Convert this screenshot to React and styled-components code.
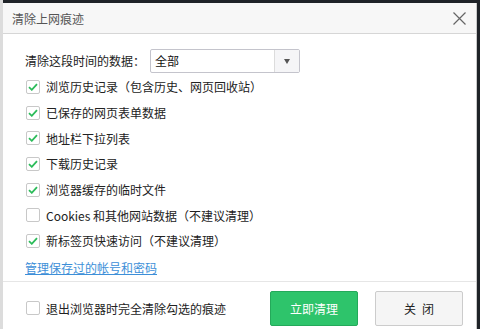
import styled, { createGlobalStyle } from "styled-components";

const Global = createGlobalStyle`
  html, body {
    margin: 0;
    padding: 0;
    background: #1f2328;
    overflow: hidden;
  }
  body {
    font-family: "Noto Sans CJK SC", "Noto Sans", sans-serif;
  }
`;

const Page = styled.div`
  width: 480px;
  height: 329px;
  padding: 3px 0 0 3px;
  box-sizing: border-box;
  background: linear-gradient(to right, #dcdcdc 0 3px, transparent 3px);
`;

const Dialog = styled.div`
  width: 474px;
  height: 340px;
  background: #ffffff;
  border-right: 1px solid #c9c9c9;
  box-sizing: border-box;
  display: flex;
  flex-direction: column;
`;

const TitleBar = styled.div`
  height: 31px;
  background: #f7f7f7;
  border-bottom: 1px solid #d6d6d6;
  box-sizing: border-box;
  display: flex;
  align-items: center;
  justify-content: space-between;
  padding: 0 10px 0 9px;
`;

const Title = styled.div`
  font-size: 12px;
  color: #555555;
`;

const Body = styled.div`
  padding: 15px 0 0 22px;
  display: flex;
  flex-direction: column;
`;

const RangeRow = styled.div`
  height: 25px;
  display: flex;
  align-items: flex-start;
`;

const Label = styled.span`
  font-size: 12px;
  color: #222222;
  line-height: 24px;
  width: 125px;
`;

const Select = styled.div`
  width: 150px;
  height: 24px;
  border: 1px solid #c4c4cc;
  border-radius: 2px;
  box-sizing: border-box;
  display: flex;
`;

const SelectValue = styled.div`
  flex: 1;
  font-size: 12px;
  color: #111111;
  line-height: 22px;
  padding-left: 4px;
`;

const SelectArrow = styled.div`
  width: 24px;
  border-left: 1px solid #dcdcdc;
  background: #f5f5f7;
  display: flex;
  align-items: center;
  justify-content: center;

  &::after {
    content: "";
    border-left: 3.5px solid transparent;
    border-right: 3.5px solid transparent;
    border-top: 5px solid #555555;
  }
`;

const Row = styled.label`
  height: 25.7px;
  display: flex;
  align-items: center;
  gap: 6px;
  padding-left: 1px;
  font-size: 12px;
  color: #222222;
`;

const Box = styled.span`
  width: 14px;
  height: 14px;
  border: 1px solid #c8c8c8;
  border-radius: 2px;
  box-sizing: border-box;
  background: #ffffff;
  display: flex;
  align-items: center;
  justify-content: center;
  flex-shrink: 0;
`;

const Link = styled.a`
  height: 27px;
  line-height: 27px;
  font-size: 12px;
  color: #3d8fd8;
  text-decoration: underline;
`;

const Footer = styled.div`
  border-top: 1px solid #e6e6e6;
  display: flex;
  align-items: center;
  padding: 9px 0 0 22px;
`;

const FooterOption = styled(Row)`
  flex: 1;
  height: 34px;
`;

const Button = styled.button`
  width: 88px;
  height: 35px;
  border-radius: 2px;
  font-family: inherit;
  font-size: 12px;
  margin-right: ${(p) => p.$gap || 0}px;
  border: 1px solid ${(p) => (p.$primary ? "#24a95a" : "#cccccc")};
  background: ${(p) => (p.$primary ? "#2ec46b" : "#f5f5f5")};
  color: ${(p) => (p.$primary ? "#ffffff" : "#222222")};
  padding: 0;
`;

function Check({ on }) {
  return (
    <Box>
      {on && (
        <svg width="10" height="8" viewBox="0 0 10 8">
          <path
            d="M1 4.2 L3.8 6.8 L9 1.2"
            fill="none"
            stroke="#2cbc5a"
            strokeWidth="1.8"
          />
        </svg>
      )}
    </Box>
  );
}

const items = [
  ["浏览历史记录（包含历史、网页回收站）", true],
  ["已保存的网页表单数据", true],
  ["地址栏下拉列表", true],
  ["下载历史记录", true],
  ["浏览器缓存的临时文件", true],
  ["Cookies 和其他网站数据（不建议清理）", false],
  ["新标签页快速访问（不建议清理）", true],
];

export default function App() {
  return (
    <>
      <Global />
      <Page>
        <Dialog>
          <TitleBar>
            <Title>清除上网痕迹</Title>
            <svg width="13" height="13" viewBox="0 0 13 13">
              <path d="M0.5 0.5 L12.5 12.5 M12.5 0.5 L0.5 12.5" stroke="#666" strokeWidth="1.2" />
            </svg>
          </TitleBar>
          <Body>
            <RangeRow>
              <Label>清除这段时间的数据：</Label>
              <Select>
                <SelectValue>全部</SelectValue>
                <SelectArrow />
              </Select>
            </RangeRow>
            {items.map(([text, on]) => (
              <Row key={text}>
                <Check on={on} />
                {text}
              </Row>
            ))}
            <Link href="#">管理保存过的帐号和密码</Link>
          </Body>
          <Footer>
            <FooterOption>
              <Check on={false} />
              退出浏览器时完全清除勾选的痕迹
            </FooterOption>
            <Button $primary $gap={17}>立即清理</Button>
            <Button $gap={13}>关{"\u2002"}闭</Button>
          </Footer>
        </Dialog>
      </Page>
    </>
  );
}
